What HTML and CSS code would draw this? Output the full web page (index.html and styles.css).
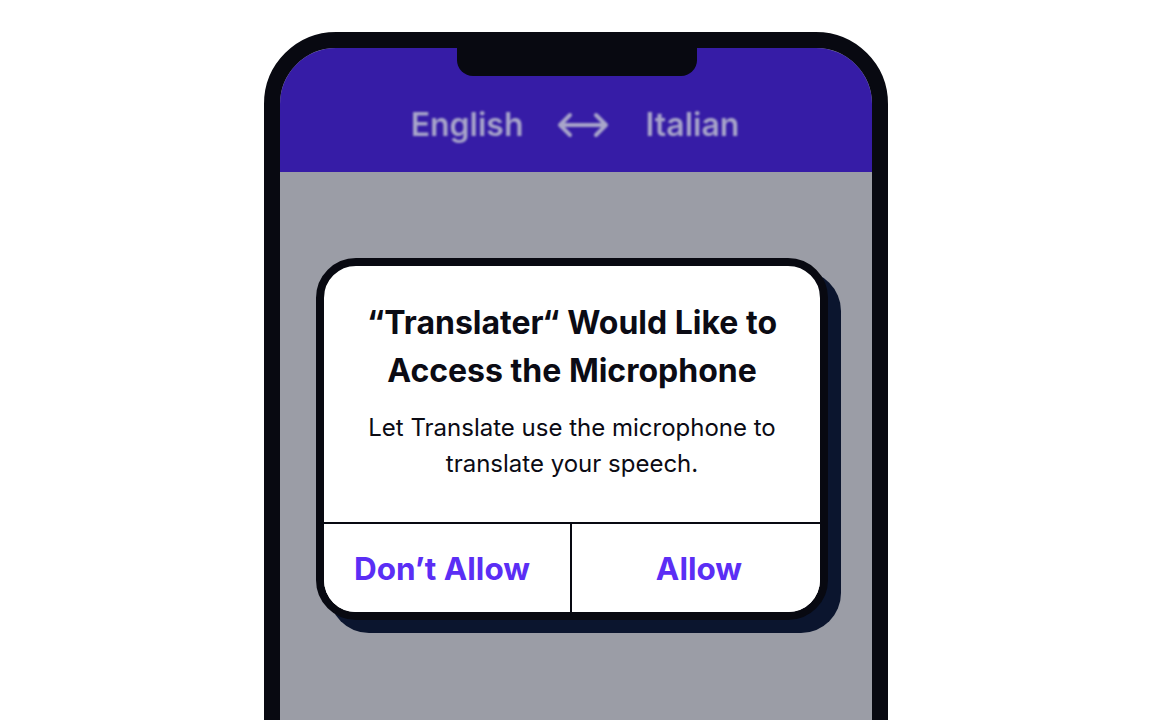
FILE: index.html
```html
<!DOCTYPE html>
<html lang="en">
<head>
<meta charset="utf-8">
<title>Translater</title>
<link rel="stylesheet" href="styles.css">
</head>
<body>
<div class="phone">
  <div class="notch"></div>
  <header class="header">
    <div class="langs">
      <span class="lang">English</span>
      <svg class="swap" width="52" height="26" viewBox="0 0 52 26" aria-hidden="true">
        <path d="M3 13 H49 M13 3 L3 13 L13 23 M39 3 L49 13 L39 23" fill="none" stroke="currentColor" stroke-width="4" stroke-linecap="round" stroke-linejoin="round"/>
      </svg>
      <span class="lang">Italian</span>
    </div>
  </header>
  <main class="screen">
    <div class="alert">
      <div class="alert-body">
        <h1 class="alert-title">“Translater“ Would Like to Access the Microphone</h1>
        <p class="alert-text">Let Translate use the microphone to translate your speech.</p>
      </div>
      <div class="alert-actions">
        <button class="alert-btn">Don’t Allow</button>
        <button class="alert-btn">Allow</button>
      </div>
    </div>
  </main>
</div>
</body>
</html>
```

FILE: styles.css
```css
html, body {
  margin: 0;
  padding: 0;
  background: #ffffff;
  overflow: hidden;
  height: 720px;
}

body {
  font-family: Inter, "Noto Sans", sans-serif;
}

.phone {
  position: relative;
  box-sizing: border-box;
  width: 624px;
  height: 800px;
  margin: 32px 0 0 264px;
  border: 16px solid #080911;
  border-radius: 72px 72px 0 0;
  background: #9b9da6;
  overflow: hidden;
  display: flex;
  flex-direction: column;
}

.notch {
  position: absolute;
  top: 0;
  left: 177px;
  width: 240px;
  height: 28px;
  background: #080911;
  border-radius: 0 0 16px 16px;
  z-index: 2;
}

.header {
  height: 124px;
  background: #361ca6;
  display: flex;
  justify-content: center;
  align-items: flex-start;
  padding-top: 57px;
  box-sizing: border-box;
}

.langs {
  display: flex;
  align-items: center;
  color: #a9a6ca;
  filter: blur(1.2px);
  margin-left: -2px;
}

.lang {
  font-size: 32px;
  font-weight: 600;
  line-height: 40px;
}

.swap {
  display: block;
  margin: 0 37px 0 33px;
}

.screen {
  flex: 1;
  padding: 86px 0 0 36px;
}

.alert {
  box-sizing: border-box;
  width: 512px;
  border: 8px solid #080911;
  border-radius: 40px;
  background: #ffffff;
  box-shadow: 13px 13px 0 0 #0b152e;
  overflow: hidden;
}

.alert-body {
  padding: 33px 12px 40px;
  text-align: center;
}

.alert-title {
  margin: 0;
  font-size: 32px;
  line-height: 48px;
  font-weight: 700;
  color: #0b0b14;
  padding: 0 20px;
}

.alert-text {
  margin: 15px 0 0;
  font-size: 24px;
  line-height: 36px;
  font-weight: 400;
  color: #0b0b14;
  padding: 0 20px;
}

.alert-actions {
  display: grid;
  grid-template-columns: 1fr 1fr;
  border-top: 2px solid #080911;
}

.alert-btn {
  height: 88px;
  border: 0;
  background: #ffffff;
  font-family: Inter, "Noto Sans", sans-serif;
  font-size: 31.5px;
  font-weight: 700;
  color: #5b2ef5;
  cursor: pointer;
  padding: 0;
}

.alert-btn:first-child {
  border-right: 2px solid #080911;
  padding-right: 10px;
}

.alert-btn:last-child {
  padding-left: 6px;
}
```
